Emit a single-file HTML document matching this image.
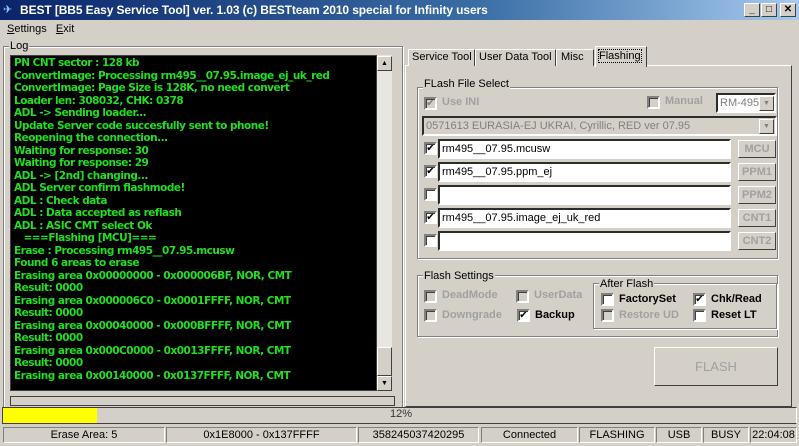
<!DOCTYPE html>
<html><head><meta charset="utf-8"><style>
*{margin:0;padding:0;box-sizing:border-box}
body{width:799px;height:446px;background:#d4d0c8;font-family:"Liberation Sans",sans-serif;font-size:11px;position:relative;overflow:hidden;color:#000}
.a{position:absolute}
.title{left:0;top:0;width:799px;height:20px;background:linear-gradient(90deg,#0a246a,#3a6ea5 60%,#a6caf0);color:#fff;font-weight:bold;font-size:12px;line-height:20px;padding-left:20px;letter-spacing:-0.1px}
.tb{top:3px;width:16px;height:14px;background:#d4d0c8;border:1px solid;border-color:#fff #404040 #404040 #fff;font-size:10px;line-height:12px;text-align:center;color:#000;font-weight:bold}
.grp{border:1px solid #808080;box-shadow:1px 1px 0 #fff inset,1px 1px 0 #fff}
.lbl{background:#d4d0c8;padding:0 1px;font-size:11px;line-height:12px}
.log{left:10px;top:55px;width:367px;height:336px;background:#000;color:#22dd22;font-weight:bold;font-size:10.5px;padding:1px 0 0 3px;font-family:"DejaVu Sans",sans-serif;letter-spacing:-0.5px;border:1px solid #404040;overflow:hidden}
.log div{height:12.52px;line-height:12.5px;white-space:pre}
.sb{left:377px;top:55px;width:15px;height:336px;background:#e8e6e0}
.btn3{background:#d4d0c8;border:1px solid;border-color:#fff #404040 #404040 #fff}
.sunk{border:1px solid;border-color:#808080 #fff #fff #808080}
.edit{background:#fff;border:2px inset #d4d0c8;border-color:#808080 #fff #fff #808080;height:20px;font-size:11px;line-height:16px;padding-left:2px}
.cb{width:13px;height:13px;background:#fff;border:2px solid;border-color:#808080 #fff #fff #808080;box-shadow:inset 1px 1px 0 #404040;font-size:10px;line-height:9px;text-align:center}
.cb.dis{background:#d4d0c8}
.gry{color:#a0a0a0;font-weight:bold}
.sbtn{width:38px;height:18px;color:#a0a0a0;font-weight:bold;font-size:11px;line-height:16px;text-align:center}
.st{top:427px;height:16px;border:1px solid;border-color:#808080 #fff #fff #808080;text-align:center;line-height:14px;font-size:11px}
</style></head><body>
<div class="a title">BEST [BB5 Easy Service Tool] ver. 1.03 (c) BESTteam 2010 special for Infinity users</div>
<div class="a" style="left:3px;top:4px;width:14px;height:12px;color:#9cf;font-size:11px;line-height:12px">✈</div>
<div class="a tb" style="left:744px">_</div>
<div class="a tb" style="left:761px">□</div>
<div class="a tb" style="left:780px">✕</div>
<div class="a" style="left:7px;top:23px"><u>S</u>ettings&nbsp;&nbsp;&nbsp;<u>E</u>xit</div>

<div class="a grp" style="left:3px;top:46px;width:400px;height:364px"></div>
<div class="a lbl" style="left:9px;top:40px">Log</div>
<div class="a log">
<div>PN CNT sector : 128 kb</div>
<div>ConvertImage: Processing rm495__07.95.image_ej_uk_red</div>
<div>ConvertImage: Page Size is 128K, no need convert</div>
<div>Loader len: 308032, CHK: 0378</div>
<div>ADL -&gt; Sending loader...</div>
<div>Update Server code succesfully sent to phone!</div>
<div>Reopening the connection...</div>
<div>Waiting for response: 30</div>
<div>Waiting for response: 29</div>
<div>ADL -&gt; [2nd] changing...</div>
<div>ADL Server confirm flashmode!</div>
<div>ADL : Check data</div>
<div>ADL : Data accepted as reflash</div>
<div>ADL : ASIC CMT select Ok</div>
<div>   ===Flashing [MCU]===</div>
<div>Erase : Processing rm495__07.95.mcusw</div>
<div>Found 6 areas to erase</div>
<div>Erasing area 0x00000000 - 0x000006BF, NOR, CMT</div>
<div>Result: 0000</div>
<div>Erasing area 0x000006C0 - 0x0001FFFF, NOR, CMT</div>
<div>Result: 0000</div>
<div>Erasing area 0x00040000 - 0x000BFFFF, NOR, CMT</div>
<div>Result: 0000</div>
<div>Erasing area 0x000C0000 - 0x0013FFFF, NOR, CMT</div>
<div>Result: 0000</div>
<div>Erasing area 0x00140000 - 0x0137FFFF, NOR, CMT</div>
</div>
<div class="a sb"></div>
<div class="a btn3" style="left:377px;top:56px;width:15px;height:15px;font-size:7px;text-align:center;line-height:13px">▲</div>
<div class="a btn3" style="left:377px;top:347px;width:15px;height:29px"></div>
<div class="a btn3" style="left:377px;top:376px;width:15px;height:15px;font-size:7px;text-align:center;line-height:13px">▼</div>
<div class="a sunk" style="left:10px;top:396px;width:385px;height:10px;border-color:#404040 #404040 #404040 #404040"></div>

<div class="a btn3" style="left:405px;top:65px;width:387px;height:342px;border-right-color:#404040"></div>
<div class="a btn3" style="left:408px;top:49px;width:67px;height:17px;border-bottom:none;font-size:11px;line-height:15px;padding-left:3px">Service Tool</div>
<div class="a btn3" style="left:475px;top:49px;width:81px;height:17px;border-bottom:none;line-height:15px;padding-left:3px">User Data Tool</div>
<div class="a btn3" style="left:556px;top:49px;width:38px;height:17px;border-bottom:none;line-height:15px;padding-left:4px">Misc</div>
<div class="a btn3" style="left:595px;top:46px;width:52px;height:21px;border-bottom:none;line-height:18px;padding-left:3px"><span style="outline:1px dotted #000">Flashing</span></div>

<div class="a grp" style="left:417px;top:87px;width:361px;height:172px"></div>
<div class="a lbl" style="left:423px;top:78px">FLash File Select</div>
<div class="a cb dis" style="left:424px;top:97px;color:#808080">✔</div>
<div class="a gry" style="left:442px;top:96px">Use INI</div>
<div class="a cb dis" style="left:647px;top:96px"></div>
<div class="a gry" style="left:665px;top:95px">Manual</div>
<div class="a edit" style="left:716px;top:93px;width:60px;height:20px;color:#808080;background:#fff">RM-495</div>
<div class="a btn3" style="left:759px;top:96px;width:15px;height:15px;font-size:7px;text-align:center;line-height:13px;color:#808080">▼</div>
<div class="a edit" style="left:422px;top:116px;width:355px;height:20px;background:#d4d0c8;color:#808080">0571613 EURASIA-EJ UKRAI, Cyrillic, RED ver 07.95</div>
<div class="a btn3" style="left:759px;top:119px;width:15px;height:15px;font-size:7px;text-align:center;line-height:13px;color:#808080">▼</div>

<div class="a cb" style="left:424px;top:142px">✔</div><div class="a edit" style="left:438px;top:139px;width:293px">rm495__07.95.mcusw</div><div class="a btn3 sbtn" style="left:738px;top:140px">MCU</div>
<div class="a cb" style="left:424px;top:165px">✔</div><div class="a edit" style="left:438px;top:162px;width:293px">rm495__07.95.ppm_ej</div><div class="a btn3 sbtn" style="left:738px;top:163px">PPM1</div>
<div class="a cb" style="left:424px;top:188px"></div><div class="a edit" style="left:438px;top:185px;width:293px"></div><div class="a btn3 sbtn" style="left:738px;top:186px">PPM2</div>
<div class="a cb" style="left:424px;top:211px">✔</div><div class="a edit" style="left:438px;top:208px;width:293px">rm495__07.95.image_ej_uk_red</div><div class="a btn3 sbtn" style="left:738px;top:209px">CNT1</div>
<div class="a cb" style="left:424px;top:234px"></div><div class="a edit" style="left:438px;top:231px;width:293px"></div><div class="a btn3 sbtn" style="left:738px;top:232px">CNT2</div>

<div class="a grp" style="left:417px;top:275px;width:361px;height:62px"></div>
<div class="a lbl" style="left:423px;top:270px">Flash Settings</div>
<div class="a cb dis" style="left:424px;top:290px"></div><div class="a gry" style="left:442px;top:289px">DeadMode</div>
<div class="a cb dis" style="left:516px;top:290px"></div><div class="a gry" style="left:534px;top:289px">UserData</div>
<div class="a cb dis" style="left:424px;top:309px"></div><div class="a gry" style="left:442px;top:309px">Downgrade</div>
<div class="a cb" style="left:517px;top:309px">✔</div><div class="a" style="left:535px;top:309px;font-weight:bold">Backup</div>

<div class="a grp" style="left:593px;top:283px;width:184px;height:46px"></div>
<div class="a lbl" style="left:599px;top:278px">After Flash</div>
<div class="a cb" style="left:601px;top:293px"></div><div class="a" style="left:619px;top:293px;font-weight:bold">FactorySet</div>
<div class="a cb" style="left:693px;top:293px">✔</div><div class="a" style="left:711px;top:293px;font-weight:bold">Chk/Read</div>
<div class="a cb dis" style="left:601px;top:309px"></div><div class="a gry" style="left:619px;top:309px">Restore UD</div>
<div class="a cb" style="left:693px;top:309px"></div><div class="a" style="left:711px;top:309px;font-weight:bold">Reset LT</div>

<div class="a btn3" style="left:654px;top:347px;width:124px;height:39px;color:#a0a0a0;font-size:13px;text-align:center;line-height:37px">FLASH</div>

<div class="a" style="left:2px;top:407px;width:795px;height:17px;border:1px solid;border-color:#404040 #fff #404040 #404040;background:#d4d0c8"></div>
<div class="a" style="left:3px;top:408px;width:94px;height:15px;background:#ffff00"></div>
<div class="a" style="left:390px;top:408px;color:#333">12%</div>

<div class="a st" style="left:3px;width:162px">Erase Area: 5</div>
<div class="a st" style="left:166px;width:191px">0x1E8000 - 0x137FFFF</div>
<div class="a st" style="left:358px;width:121px">358245037420295</div>
<div class="a st" style="left:481px;width:97px">Connected</div>
<div class="a st" style="left:579px;width:76px">FLASHING</div>
<div class="a st" style="left:656px;width:46px">USB</div>
<div class="a st" style="left:703px;width:46px">BUSY</div>
<div class="a st" style="left:750px;width:47px">22:04:08</div>
</body></html>
